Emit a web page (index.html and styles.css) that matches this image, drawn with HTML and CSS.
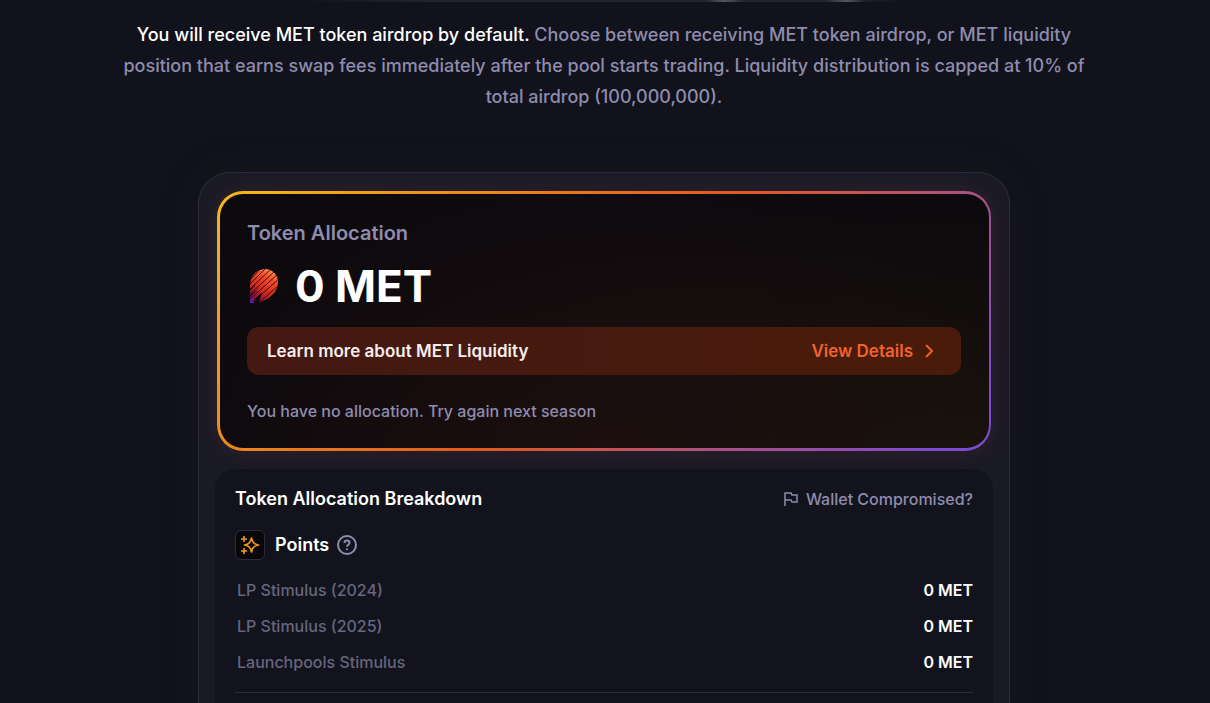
FILE: index.html
```html
<!DOCTYPE html>
<html lang="en">
<head>
  <meta charset="UTF-8">
  <meta name="viewport" content="width=device-width, initial-scale=1">
  <title>MET Token Allocation</title>
  <link rel="stylesheet" href="styles.css">
</head>
<body>
  <main class="page">
    <div class="hero-edge"></div>

    <p class="intro">
      <strong>You will receive MET token airdrop by default.</strong>
      Choose between receiving MET token airdrop, or MET liquidity position that earns swap fees immediately after the pool starts trading. Liquidity distribution is capped at 10% of total airdrop (100,000,000).
    </p>

    <section class="panel">
      <div class="card">
        <div class="card-body">
          <h2 class="card-title">Token Allocation</h2>
          <div class="amount">
            <svg class="logo" viewBox="0 0 32 36" aria-hidden="true">
              <defs>
                <linearGradient id="met" x1="24" y1="2" x2="5" y2="34" gradientUnits="userSpaceOnUse">
                  <stop offset="0" stop-color="#ff8a4a"/>
                  <stop offset="0.25" stop-color="#f4482a"/>
                  <stop offset="0.65" stop-color="#cc2422"/>
                  <stop offset="0.85" stop-color="#86143c"/>
                  <stop offset="1" stop-color="#6414a8"/>
                </linearGradient>
                <clipPath id="drop">
                  <path d="M17 1C25 0 31 7 31 14C31 22 26 27 20 31L12 35H3V16C4 8 9 2 17 1Z"/>
                </clipPath>
              </defs>
              <g clip-path="url(#drop)">
                <path fill="url(#met)" d="M0 0H32V36H0Z"/>
                <g fill="none" stroke="#2a0a0c" stroke-width="0.9">
                  <path d="M3 12L16 -2"/>
                  <path d="M2 17L20 -1"/>
                  <path d="M2 22L25 0"/>
                  <path d="M2 27L28 3"/>
                  <path d="M2 32L31 6"/>
                  <path d="M6 34L33 10"/>
                  <path d="M11 36L34 15"/>
                </g>
                <path fill="#100a0d" d="M2 22L9 16L7 19L2 24ZM2 28L13 19L10 22L2 30ZM7 32L15 24L12 29L8 32L9 36H7ZM8 36L9 31L15 25L13 31L12 36Z"/>
              </g>
            </svg>
            <span>0 MET</span>
          </div>
          <a class="learn" href="#liquidity">
            <span>Learn more about MET Liquidity</span>
            <span class="details">
              View Details
              <svg class="chevron" viewBox="0 0 16 16" aria-hidden="true"><path d="M5 2L11 8L5 14"/></svg>
            </span>
          </a>
          <p class="note">You have no allocation. Try again next season</p>
        </div>
      </div>

      <div class="breakdown">
        <div class="breakdown-head">
          <h3>Token Allocation Breakdown</h3>
          <button type="button" class="report">
            <svg class="flag" viewBox="0 0 14 14" aria-hidden="true"><path d="M1 14V1H7L8 3H13V10H8L7 8H1"/></svg>
            Wallet Compromised?
          </button>
        </div>

        <div class="points-head">
          <span class="points-icon">
            <svg viewBox="0 0 20 20" aria-hidden="true">
              <path d="M11.5 3C12.5 7.5 14 9 18.5 10C14 11 12.5 12.5 11.5 17C10.5 12.5 9 11 4.5 10C9 9 10.5 7.5 11.5 3Z"/>
              <path d="M4 1V7M1 4H7M4 13V19M1 16H7"/>
            </svg>
          </span>
          <h4>Points</h4>
          <button type="button" class="help" aria-label="About points">
            <svg viewBox="0 0 20 20" aria-hidden="true">
              <circle cx="10" cy="10" r="9"/>
              <path d="M7.5 8C7.5 4.8 12.5 4.8 12.5 8C12.5 9.7 10 9.7 10 11.7"/>
              <path d="M10 13.5V15"/>
            </svg>
          </button>
        </div>

        <table class="rows">
          <tbody>
            <tr><th scope="row">LP Stimulus (2024)</th><td>0 MET</td></tr>
            <tr><th scope="row">LP Stimulus (2025)</th><td>0 MET</td></tr>
            <tr><th scope="row">Launchpools Stimulus</th><td>0 MET</td></tr>
          </tbody>
        </table>
        <hr class="divider">
      </div>
    </section>
  </main>
</body>
</html>
```

FILE: styles.css
```css
* {
  box-sizing: border-box;
}
body {
  margin: 0;
  background: #11121b;
  color: #fff;
  font-family: Inter, sans-serif;
}
h2, h3, h4, p {
  margin: 0;
}
button {
  padding: 0;
  border: 0;
  background: none;
  font-family: inherit;
  cursor: pointer;
}
svg {
  display: block;
  flex: none;
}
.page {
  display: flex;
  flex-direction: column;
  align-items: center;
  min-height: 100vh;
  padding: 0 2px 0 0;
  overflow: hidden;
}
.hero-edge {
  width: 50%;
  height: 2px;
  background:
    radial-gradient(circle at 70% 0, #565660, transparent 20px),
    radial-gradient(circle at 90% 0, #565660, transparent 20px),
    linear-gradient(90deg, transparent, #22232c 20%, #22232c 90%, transparent);
}
.intro {
  width: 100%;
  max-width: 976px;
  margin: 17px 0 60px;
  color: #8f8cae;
  font-size: 18px;
  font-weight: 500;
  line-height: 31px;
  text-align: center;
}
.intro strong {
  color: #fff;
  font-weight: 500;
}

/* panel */
.panel {
  display: flex;
  flex-direction: column;
  flex: 1;
  gap: 16px;
  width: 100%;
  max-width: 812px;
  padding: 16px 16px 0;
  border: 1px solid #2b2b3b;
  border-bottom: 0;
  border-radius: 32px 32px 0 0;
  background: #1a1a27;
  box-shadow: 0 0 40px rgba(52, 40, 48, 0.2);
}
.card {
  margin: 2px;
  padding: 3px 2px 3px 3px;
  border-radius: 26px;
  background: linear-gradient(135deg, #f5b81c, #e4591d 50%, #a8508a 75%, #7c4bd0 95%);
  box-shadow: 0 0 24px rgba(244, 98, 28, 0.1);
}
.card-body {
  padding: 25px 28px 25px 27px;
  border-radius: 23px;
  background:
    radial-gradient(ellipse at 100% 100%, rgba(28, 19, 12, 0.8), transparent 70%),
    radial-gradient(ellipse at 50% 100%, rgba(34, 12, 16, 0.7), transparent 80%),
    #0c0a0d;
}
.card-title {
  color: #8f8cae;
  font-size: 20px;
  font-weight: 600;
  line-height: 28px;
}
.amount {
  display: flex;
  align-items: center;
  gap: 16px;
  margin: 15px 0 17px;
  font-size: 44px;
  font-weight: 700;
  line-height: 48px;
}
.logo {
  width: 32px;
  height: 36px;
}
.learn {
  display: flex;
  align-items: center;
  justify-content: space-between;
  height: 48px;
  padding: 0 24px 0 20px;
  border-radius: 12px;
  background: linear-gradient(90deg, #431912, #491b0a);
  color: #f7eeec;
  font-size: 17px;
  font-weight: 600;
  text-decoration: none;
}
.details {
  display: flex;
  align-items: center;
  gap: 8px;
  color: #f0622b;
}
.chevron {
  width: 16px;
  height: 16px;
  fill: none;
  stroke: #f0622b;
  stroke-width: 2;
}
.note {
  margin-top: 24px;
  color: #8f8cae;
  font-size: 16px;
  font-weight: 500;
  line-height: 24px;
}

/* breakdown */
.breakdown {
  flex: 1;
  padding: 18px 20px 20px;
  border-radius: 20px 20px 0 0;
  background: #12131c;
}
.breakdown-head {
  display: flex;
  align-items: center;
  justify-content: space-between;
  line-height: 24px;
}
.breakdown-head h3 {
  font-size: 18px;
  font-weight: 600;
}
.report {
  display: flex;
  align-items: center;
  gap: 8px;
  color: #8f8cae;
  font-size: 16px;
  font-weight: 500;
  line-height: 24px;
}
.flag {
  width: 14px;
  height: 14px;
  fill: none;
  stroke: #8f8cae;
  stroke-width: 1.5;
}
.points-head {
  display: flex;
  align-items: center;
  gap: 10px;
  margin: 19px 0 12px;
}
.points-head h4 {
  font-size: 18px;
  font-weight: 600;
  line-height: 24px;
}
.points-icon {
  display: flex;
  align-items: center;
  justify-content: center;
  width: 30px;
  height: 30px;
  border: 1px solid #2b2b3b;
  border-radius: 6px;
  background: #08080b;
}
.points-icon svg {
  width: 20px;
  height: 20px;
  fill: none;
  stroke: #f0961e;
  stroke-width: 1.6;
  stroke-linejoin: round;
}
.help {
  margin-left: -2px;
}
.help svg {
  width: 20px;
  height: 20px;
  fill: none;
  stroke: #8f8cae;
  stroke-width: 2;
}
.rows {
  width: 100%;
  border-collapse: collapse;
  font-size: 16px;
}
.rows th,
.rows td {
  height: 36px;
  padding: 0;
  line-height: 24px;
}
.rows th {
  padding-left: 2px;
  color: #67657f;
  font-weight: 500;
  text-align: left;
}
.rows td {
  font-weight: 600;
  text-align: right;
}
.divider {
  height: 1px;
  margin: 12px 0;
  border: 0;
  background: #2b2b3b;
}
```
